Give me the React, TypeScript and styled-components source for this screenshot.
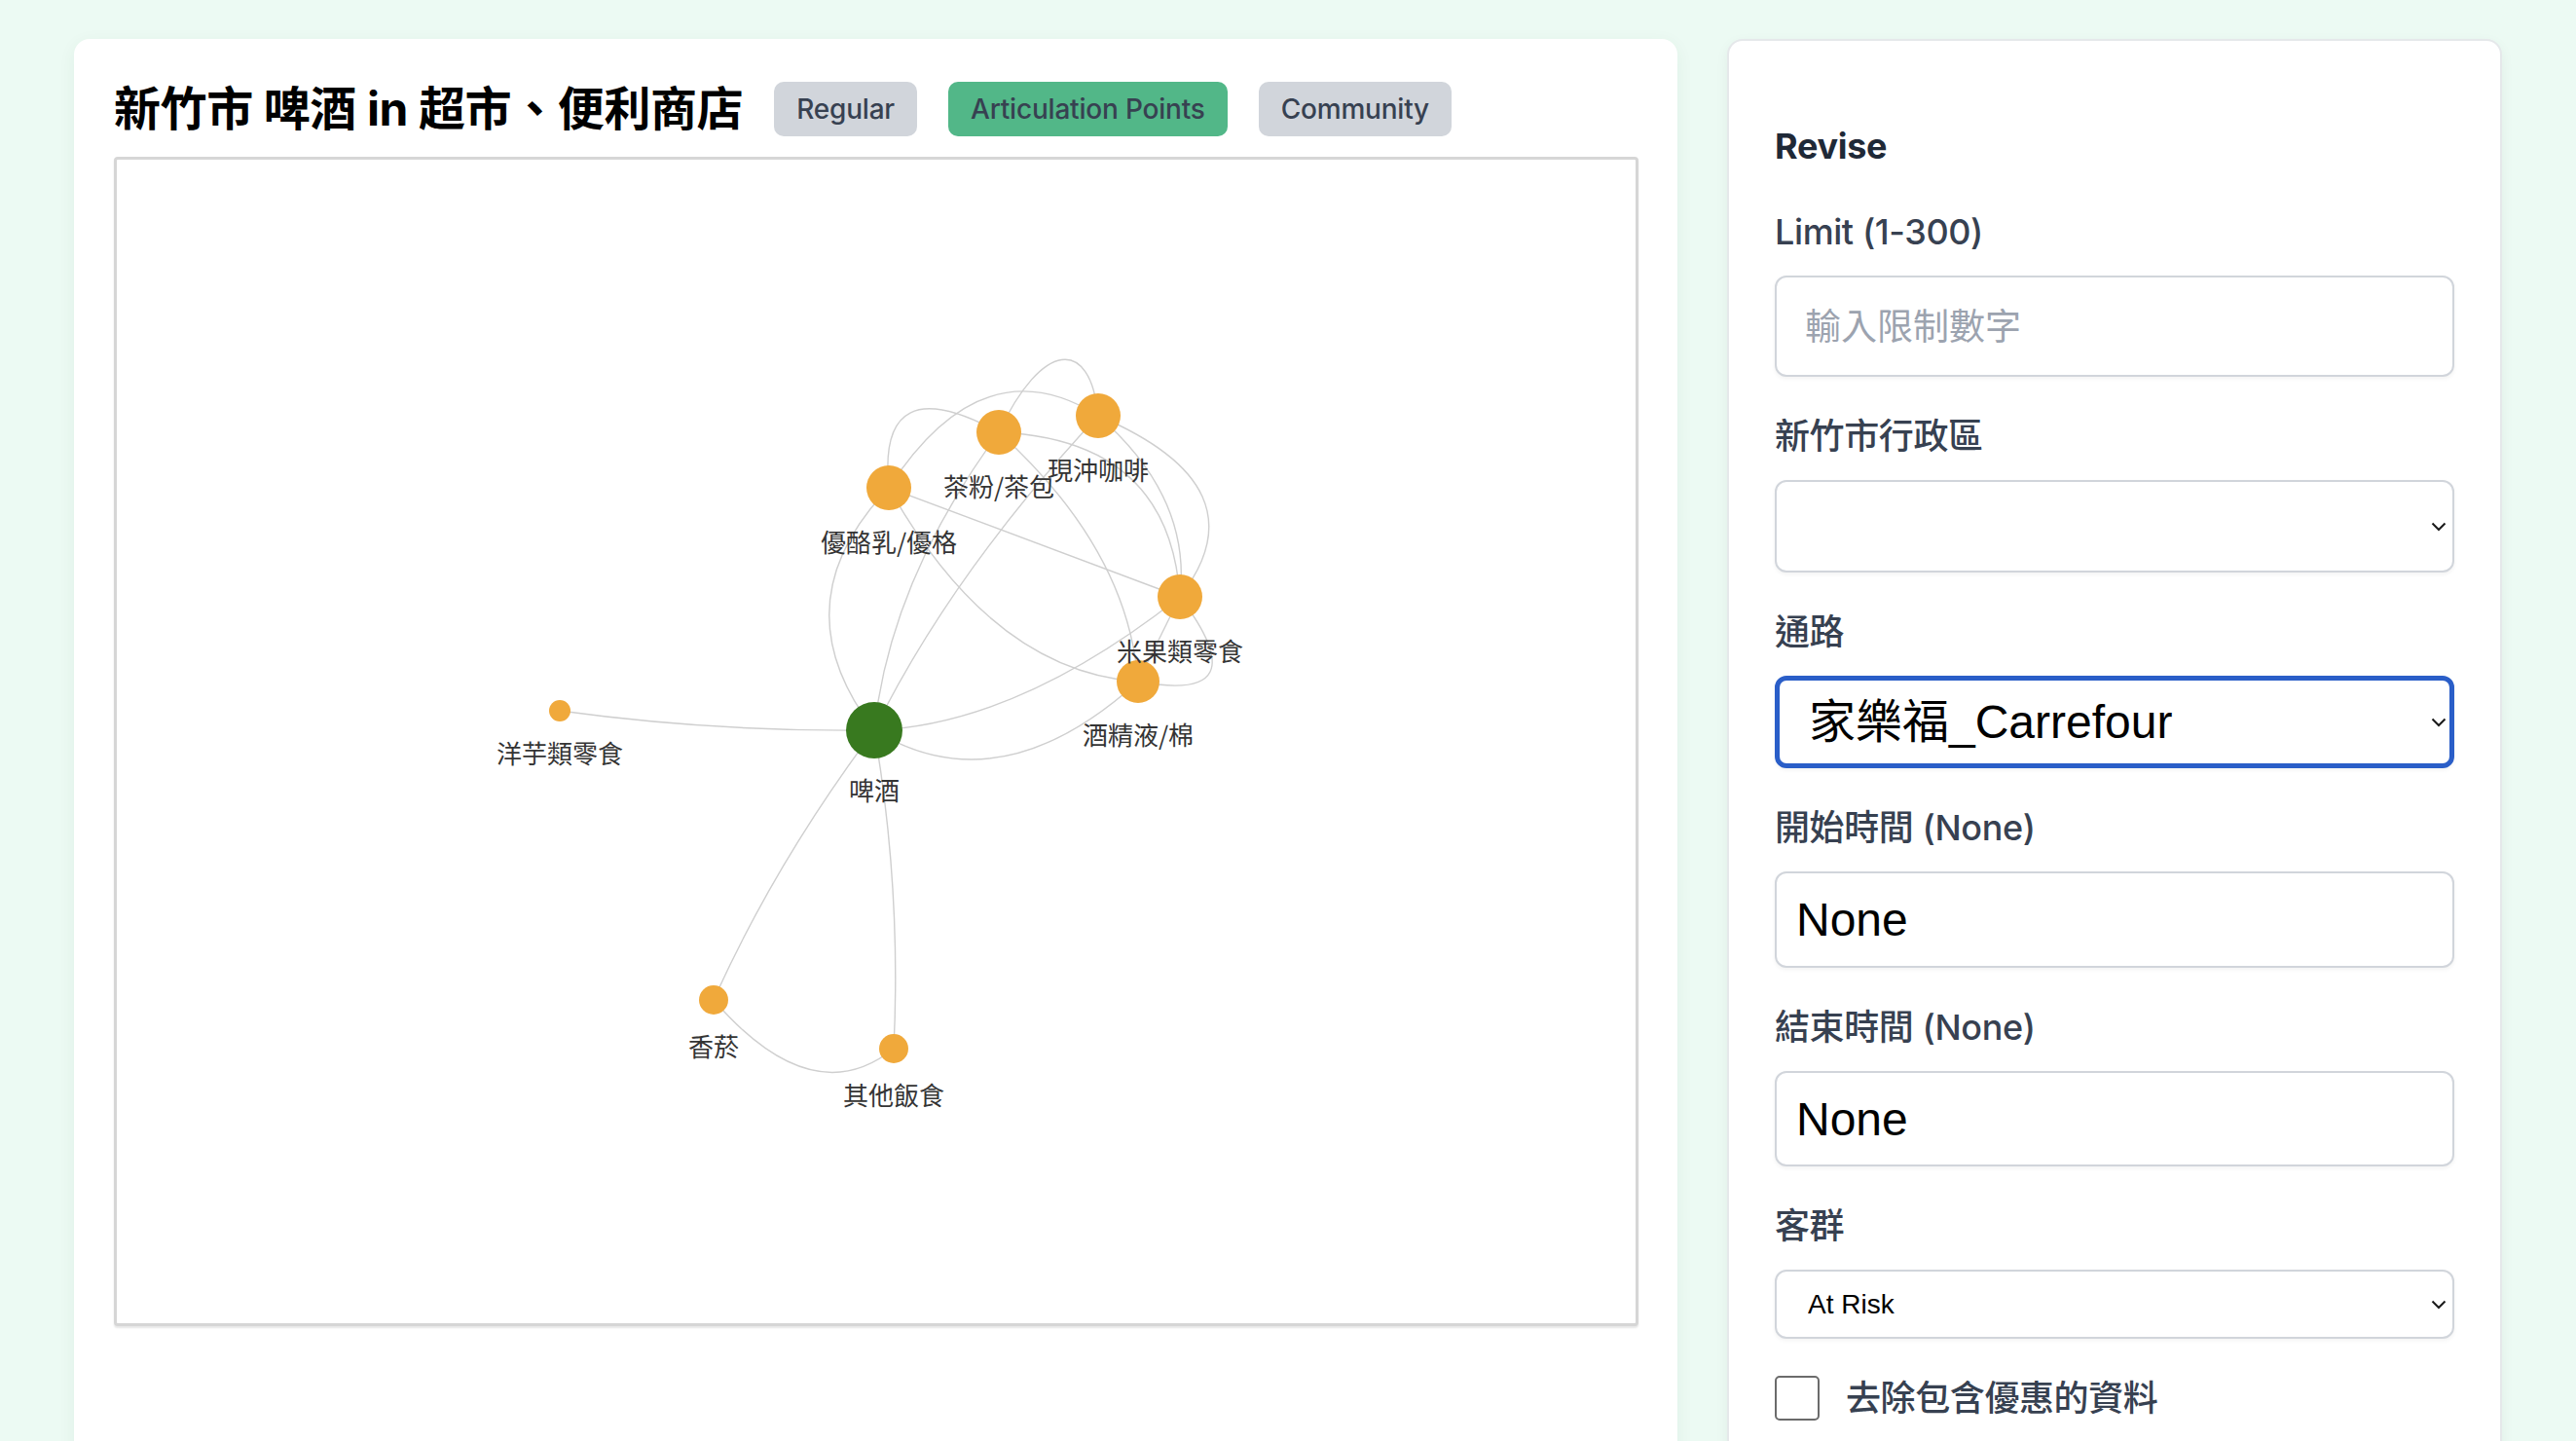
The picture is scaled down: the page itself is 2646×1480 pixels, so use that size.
import React from "react";
import styled, { createGlobalStyle } from "styled-components";

const GlobalStyle = createGlobalStyle`
  html, body {
    margin: 0;
    padding: 0;
    background: #ecfaf3;
    overflow: hidden;
  }
  body {
    font-family: Inter, "Noto Sans CJK TC", sans-serif;
  }
  * { box-sizing: border-box; }
`;

const Page = styled.div`
  display: grid;
  grid-template-columns: 1647px 796px;
  column-gap: 51px;
  align-items: start;
  padding: 40px 76px 0 76px;
  height: 1480px;
  overflow: hidden;
`;

const GraphCard = styled.section`
  background: #ffffff;
  border-radius: 16px;
  box-shadow: 0 4px 18px rgba(20, 80, 50, 0.06);
  padding: 44px 40px 0 41px;
  min-height: 1500px;
`;

const TitleRow = styled.div`
  display: flex;
  align-items: center;
  gap: 32px;
  height: 56px;
`;

const Title = styled.h1`
  margin: 0;
  font-family: Inter, "Noto Sans CJK TC", sans-serif;
  font-size: 48px;
  font-weight: 700;
  line-height: 56px;
  letter-spacing: -0.4px;
  color: #000000;
  white-space: nowrap;
`;

const ModeButton = styled.button<{ $active?: boolean }>`
  height: 56px;
  padding: 0 23px;
  border: none;
  border-radius: 10px;
  background: ${(p) => (p.$active ? "#52b788" : "#d1d5db")};
  color: #374151;
  font-family: Inter, sans-serif;
  font-size: 28px;
  font-weight: 500;
  letter-spacing: -0.2px;
  white-space: nowrap;
  cursor: pointer;
`;

const GraphFrame = styled.div`
  margin-top: 21px;
  height: 1201px;
  border: 3px solid #d6d6d6;
  border-radius: 4px;
  box-shadow: 0 2px 2px rgba(0, 0, 0, 0.1);
  background: #ffffff;
  overflow: hidden;
`;

const GraphSvg = styled.svg`
  display: block;
  width: 100%;
  height: 100%;
`;

const EdgePath = styled.path`
  fill: none;
  stroke: #cfcfcf;
  stroke-width: 1.4;
`;

const NodeLabel = styled.text`
  font-family: "Noto Sans CJK TC", "Liberation Sans", sans-serif;
  font-size: 26px;
  fill: #343434;
`;

const FormCard = styled.aside`
  background: #ffffff;
  border: 2px solid #e5e8ea;
  border-radius: 16px;
  box-shadow: 0 4px 14px rgba(0, 0, 0, 0.05);
  padding: 88px 47px 0;
  min-height: 1500px;
  display: flex;
  flex-direction: column;
`;

const FormHeading = styled.h2`
  margin: 0 0 51px;
  font-family: Inter, "Noto Sans CJK TC", sans-serif;
  font-size: 36px;
  font-weight: 700;
  line-height: 40px;
  letter-spacing: -0.3px;
  color: #1f2937;
`;

const Field = styled.div`
  display: flex;
  flex-direction: column;
  & + & {
    margin-top: 44px;
  }
`;

const FieldLabel = styled.label`
  margin-bottom: 28px;
  font-family: Inter, "Noto Sans CJK TC", sans-serif;
  font-size: 36px;
  font-weight: 500;
  line-height: 34px;
  letter-spacing: -0.4px;
  color: #374151;
`;

const TextInput = styled.input<{ $height: number; $big?: boolean }>`
  width: 100%;
  height: ${(p) => p.$height}px;
  border: 2px solid #d1d5db;
  border-radius: 12px;
  background: #ffffff;
  box-shadow: 0 2px 4px rgba(0, 0, 0, 0.05);
  outline: none;
  padding: 0 0 0 ${(p) => (p.$big ? 20 : 29)}px;
  font-family: ${(p) =>
    p.$big
      ? `"Liberation Sans", "Noto Sans CJK TC", sans-serif`
      : `Inter, "Noto Sans CJK TC", sans-serif`};
  font-size: ${(p) => (p.$big ? 48 : 37)}px;
  color: #000000;
  &::placeholder {
    color: #9ca3af;
  }
`;

const SelectWrap = styled.div`
  position: relative;
`;

const Select = styled.select<{
  $height: number;
  $fontSize: number;
  $focused?: boolean;
  $padLeft: number;
}>`
  appearance: none;
  -webkit-appearance: none;
  width: 100%;
  height: ${(p) => p.$height}px;
  border: ${(p) => (p.$focused ? "5px solid #2a5ec8" : "2px solid #d1d5db")};
  border-radius: 12px;
  background: #ffffff;
  box-shadow: 0 2px 4px rgba(0, 0, 0, 0.05);
  outline: none;
  padding: 0 40px 0 ${(p) => p.$padLeft}px;
  font-family: "Liberation Sans", "Noto Sans CJK TC", sans-serif;
  font-size: ${(p) => p.$fontSize}px;
  color: #000000;
`;

const Chevron = styled.svg`
  position: absolute;
  right: 8px;
  top: 50%;
  width: 16px;
  height: 10px;
  margin-top: -5px;
  pointer-events: none;
`;

const CheckRow = styled.label`
  display: flex;
  align-items: center;
  gap: 27px;
  margin-top: 38px;
  font-family: Inter, "Noto Sans CJK TC", sans-serif;
  font-size: 36px;
  font-weight: 500;
  line-height: 46px;
  letter-spacing: -0.4px;
  color: #374151;
`;

const CheckBox = styled.input`
  appearance: none;
  -webkit-appearance: none;
  margin: 0;
  width: 46px;
  height: 46px;
  border: 2px solid #6b6b6b;
  border-radius: 5px;
  background: #ffffff;
  flex-shrink: 0;
`;

type Node = { id: string; label: string; x: number; y: number; r: number; color: string };

const ORANGE = "#f0a93b";
const GREEN = "#38791f";

const nodes: Node[] = [
  { id: "B", label: "啤酒", x: 898, y: 750, r: 29, color: GREEN },
  { id: "Y", label: "洋芋類零食", x: 575, y: 730, r: 11, color: ORANGE },
  { id: "S", label: "香菸", x: 733, y: 1027, r: 15, color: ORANGE },
  { id: "O", label: "其他飯食", x: 918, y: 1077, r: 15, color: ORANGE },
  { id: "A", label: "酒精液/棉", x: 1169, y: 700, r: 22, color: ORANGE },
  { id: "R", label: "米果類零食", x: 1212, y: 613, r: 23, color: ORANGE },
  { id: "U", label: "優酪乳/優格", x: 913, y: 501, r: 23, color: ORANGE },
  { id: "T", label: "茶粉/茶包", x: 1026, y: 444, r: 23, color: ORANGE },
  { id: "C", label: "現沖咖啡", x: 1128, y: 427, r: 23, color: ORANGE },
];

type Edge = { from: string; to: string; c?: number[] };

const edges: Edge[] = [
  { from: "B", to: "Y", c: [735.5, 752] },
  { from: "B", to: "S", c: [796.5, 885.5] },
  { from: "B", to: "O", c: [926, 912.5] },
  { from: "S", to: "O", c: [834.5, 1144] },
  { from: "B", to: "A", c: [1026.5, 829] },
  { from: "B", to: "R", c: [1045, 744.5] },
  { from: "B", to: "U", c: [798.5, 620.5] },
  { from: "B", to: "T", c: [914, 597] },
  { from: "B", to: "C", c: [977, 589.5] },
  { from: "U", to: "A", c: [1019, 689.5] },
  { from: "U", to: "R" },
  { from: "T", to: "A", c: [1158.5, 564] },
  { from: "T", to: "R", c: [1201, 451.5] },
  { from: "U", to: "C", c: [1009.5, 352] },
  { from: "U", to: "T", c: [900.5, 375.5] },
  { from: "T", to: "C", c: [1070, 350, 1120, 345] },
  { from: "C", to: "R", c: [1300, 500] },
  { from: "C", to: "R", c: [1224, 510] },
  { from: "R", to: "A" },
  { from: "R", to: "A", c: [1295.5, 723.5] },
];

const byId = (id: string) => nodes.find((n) => n.id === id)!;

const edgeD = (e: Edge) => {
  const a = byId(e.from);
  const b = byId(e.to);
  if (!e.c) return `M ${a.x} ${a.y} L ${b.x} ${b.y}`;
  if (e.c.length === 4)
    return `M ${a.x} ${a.y} C ${e.c[0]} ${e.c[1]} ${e.c[2]} ${e.c[3]} ${b.x} ${b.y}`;
  return `M ${a.x} ${a.y} Q ${e.c[0]} ${e.c[1]} ${b.x} ${b.y}`;
};

const NetworkGraph = () => (
  <GraphSvg viewBox="120 164 1560 1195">
    <g>
      {edges.map((e, i) => (
        <EdgePath key={i} d={edgeD(e)} />
      ))}
    </g>
    <g>
      {nodes.map((n) => (
        <circle key={n.id} cx={n.x} cy={n.y} r={n.r} fill={n.color} />
      ))}
    </g>
    <g>
      {nodes.map((n) => (
        <NodeLabel key={n.id} x={n.x} y={n.y + n.r + 43} textAnchor="middle">
          {n.label}
        </NodeLabel>
      ))}
    </g>
  </GraphSvg>
);

const ChevronIcon = () => (
  <Chevron viewBox="0 0 16 10">
    <polyline points="1.5,1.5 8,8 14.5,1.5" fill="none" stroke="#1a1a1a" strokeWidth="2" />
  </Chevron>
);

export default function App() {
  return (
    <>
      <GlobalStyle />
      <Page>
        <GraphCard>
          <TitleRow>
            <Title>新竹市 啤酒 in 超市、便利商店</Title>
            <ModeButton>Regular</ModeButton>
            <ModeButton $active>Articulation Points</ModeButton>
            <ModeButton>Community</ModeButton>
          </TitleRow>
          <GraphFrame>
            <NetworkGraph />
          </GraphFrame>
        </GraphCard>

        <FormCard>
          <FormHeading>Revise</FormHeading>

          <Field>
            <FieldLabel>Limit (1-300)</FieldLabel>
            <TextInput $height={104} placeholder="輸入限制數字" />
          </Field>

          <Field>
            <FieldLabel>新竹市行政區</FieldLabel>
            <SelectWrap>
              <Select $height={95} $fontSize={37} $padLeft={30} defaultValue="">
                <option value=""></option>
              </Select>
              <ChevronIcon />
            </SelectWrap>
          </Field>

          <Field>
            <FieldLabel>通路</FieldLabel>
            <SelectWrap>
              <Select $height={95} $fontSize={48} $padLeft={30} $focused defaultValue="carrefour">
                <option value="carrefour">家樂福_Carrefour</option>
              </Select>
              <ChevronIcon />
            </SelectWrap>
          </Field>

          <Field>
            <FieldLabel>開始時間 (None)</FieldLabel>
            <TextInput $height={99} $big defaultValue="None" />
          </Field>

          <Field>
            <FieldLabel>結束時間 (None)</FieldLabel>
            <TextInput $height={98} $big defaultValue="None" />
          </Field>

          <Field>
            <FieldLabel>客群</FieldLabel>
            <SelectWrap>
              <Select $height={71} $fontSize={28} $padLeft={32} defaultValue="risk">
                <option value="risk">At Risk</option>
              </Select>
              <ChevronIcon />
            </SelectWrap>
          </Field>

          <CheckRow>
            <CheckBox type="checkbox" />
            去除包含優惠的資料
          </CheckRow>
        </FormCard>
      </Page>
    </>
  );
}
